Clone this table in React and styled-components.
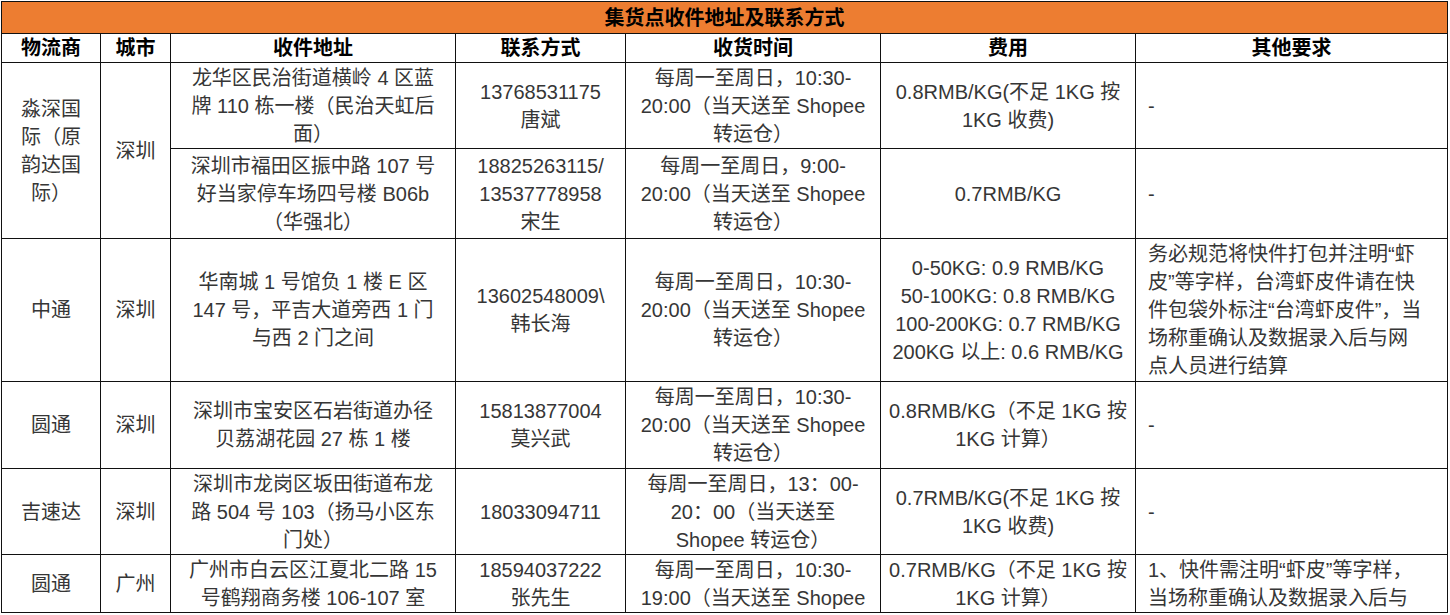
import React from 'react';
import styled, { createGlobalStyle } from 'styled-components';

const GlobalStyle = createGlobalStyle`
  body {
    margin: 0;
    background: #fff;
    font-family: "Liberation Sans", "Noto Sans CJK SC", sans-serif;
  }
`;

const Page = styled.div`
  padding: 1px 0 0 1px;
`;

const Table = styled.table`
  border-collapse: collapse;
  table-layout: fixed;
  width: 1446px;
  font-size: 20px;
  line-height: 28px;
  color: #363636;
`;

const TitleCell = styled.th`
  height: 31px;
  padding: 0;
  background: #ed7d31;
  border: 1px solid #111;
  color: #000;
  font-weight: bold;
  text-align: center;
`;

const HeadCell = styled.th`
  height: 28px;
  padding: 0;
  border: 1px solid #111;
  color: #000;
  font-weight: bold;
  text-align: center;
`;

const Row = styled.tr`
  height: ${(p) => p.$h}px;
`;

const Cell = styled.td`
  padding: 0 0 0 ${(p) => (p.$left ? '12px' : '0')};
  border: 1px solid #111;
  text-align: ${(p) => (p.$left ? 'left' : 'center')};
  vertical-align: middle;
  white-space: nowrap;
  overflow: hidden;
`;

const Line = styled.div`
  height: 28px;
`;

const columns = [99, 70, 285, 170, 255, 255, 312];
const headers = ['物流商', '城市', '收件地址', '联系方式', '收货时间', '费用', '其他要求'];

const rows = [
  {
    h: 86,
    provider: { lines: ['淼深国', '际（原', '韵达国', '际）'], span: 2 },
    city: { lines: ['深圳'], span: 2 },
    addr: ['龙华区民治街道横岭 4 区蓝', '牌 110 栋一楼（民治天虹后', '面）'],
    contact: ['13768531175', '唐斌'],
    time: ['每周一至周日，10:30-', '20:00（当天送至 Shopee', '转运仓）'],
    fee: ['0.8RMB/KG(不足 1KG 按', '1KG 收费)'],
    other: ['-'],
  },
  {
    h: 90,
    addr: ['深圳市福田区振中路 107 号', '好当家停车场四号楼 B06b', '（华强北）'],
    contact: ['18825263115/', '13537778958', '宋生'],
    time: ['每周一至周日，9:00-', '20:00（当天送至 Shopee', '转运仓）'],
    fee: ['0.7RMB/KG'],
    other: ['-'],
  },
  {
    h: 143,
    provider: { lines: ['中通'] },
    city: { lines: ['深圳'] },
    addr: ['华南城 1 号馆负 1 楼 E 区', '147 号，平吉大道旁西 1 门', '与西 2 门之间'],
    contact: ['13602548009\\', '韩长海'],
    time: ['每周一至周日，10:30-', '20:00（当天送至 Shopee', '转运仓）'],
    fee: ['0-50KG: 0.9 RMB/KG', '50-100KG: 0.8 RMB/KG', '100-200KG: 0.7 RMB/KG', '200KG 以上: 0.6 RMB/KG'],
    other: [
      '务必规范将快件打包并注明“虾',
      '皮”等字样，台湾虾皮件请在快',
      '件包袋外标注“台湾虾皮件”，当',
      '场称重确认及数据录入后与网',
      '点人员进行结算',
    ],
  },
  {
    h: 87,
    provider: { lines: ['圆通'] },
    city: { lines: ['深圳'] },
    addr: ['深圳市宝安区石岩街道办径', '贝荔湖花园 27 栋 1 楼'],
    contact: ['15813877004', '莫兴武'],
    time: ['每周一至周日，10:30-', '20:00（当天送至 Shopee', '转运仓）'],
    fee: ['0.8RMB/KG（不足 1KG 按', '1KG 计算）'],
    other: ['-'],
  },
  {
    h: 86,
    provider: { lines: ['吉速达'] },
    city: { lines: ['深圳'] },
    addr: ['深圳市龙岗区坂田街道布龙', '路 504 号 103（扬马小区东', '门处）'],
    contact: ['18033094711'],
    time: ['每周一至周日，13：00-', '20：00（当天送至', 'Shopee 转运仓）'],
    fee: ['0.7RMB/KG(不足 1KG 按', '1KG 收费)'],
    other: ['-'],
  },
  {
    h: 58,
    provider: { lines: ['圆通'] },
    city: { lines: ['广州'] },
    addr: ['广州市白云区江夏北二路 15', '号鹤翔商务楼 106-107 室'],
    contact: ['18594037222', '张先生'],
    time: ['每周一至周日，10:30-', '19:00（当天送至 Shopee'],
    fee: ['0.7RMB/KG（不足 1KG 按', '1KG 计算）'],
    other: ['1、快件需注明“虾皮”等字样，', '当场称重确认及数据录入后与'],
  },
];

const Lines = ({ items }) => items.map((t, i) => <Line key={i}>{t}</Line>);

const App = () => (
  <Page>
    <GlobalStyle />
    <Table>
      <colgroup>
        {columns.map((w, i) => (
          <col key={i} style={{ width: w }} />
        ))}
      </colgroup>
      <thead>
        <tr>
          <TitleCell colSpan={7}>集货点收件地址及联系方式</TitleCell>
        </tr>
        <tr>
          {headers.map((h) => (
            <HeadCell key={h}>{h}</HeadCell>
          ))}
        </tr>
      </thead>
      <tbody>
        {rows.map((r, i) => (
          <Row key={i} $h={r.h}>
            {r.provider && (
              <Cell rowSpan={r.provider.span || 1}>
                <Lines items={r.provider.lines} />
              </Cell>
            )}
            {r.city && (
              <Cell rowSpan={r.city.span || 1}>
                <Lines items={r.city.lines} />
              </Cell>
            )}
            <Cell>
              <Lines items={r.addr} />
            </Cell>
            <Cell>
              <Lines items={r.contact} />
            </Cell>
            <Cell>
              <Lines items={r.time} />
            </Cell>
            <Cell>
              <Lines items={r.fee} />
            </Cell>
            <Cell $left>
              <Lines items={r.other} />
            </Cell>
          </Row>
        ))}
      </tbody>
    </Table>
  </Page>
);

export default App;
